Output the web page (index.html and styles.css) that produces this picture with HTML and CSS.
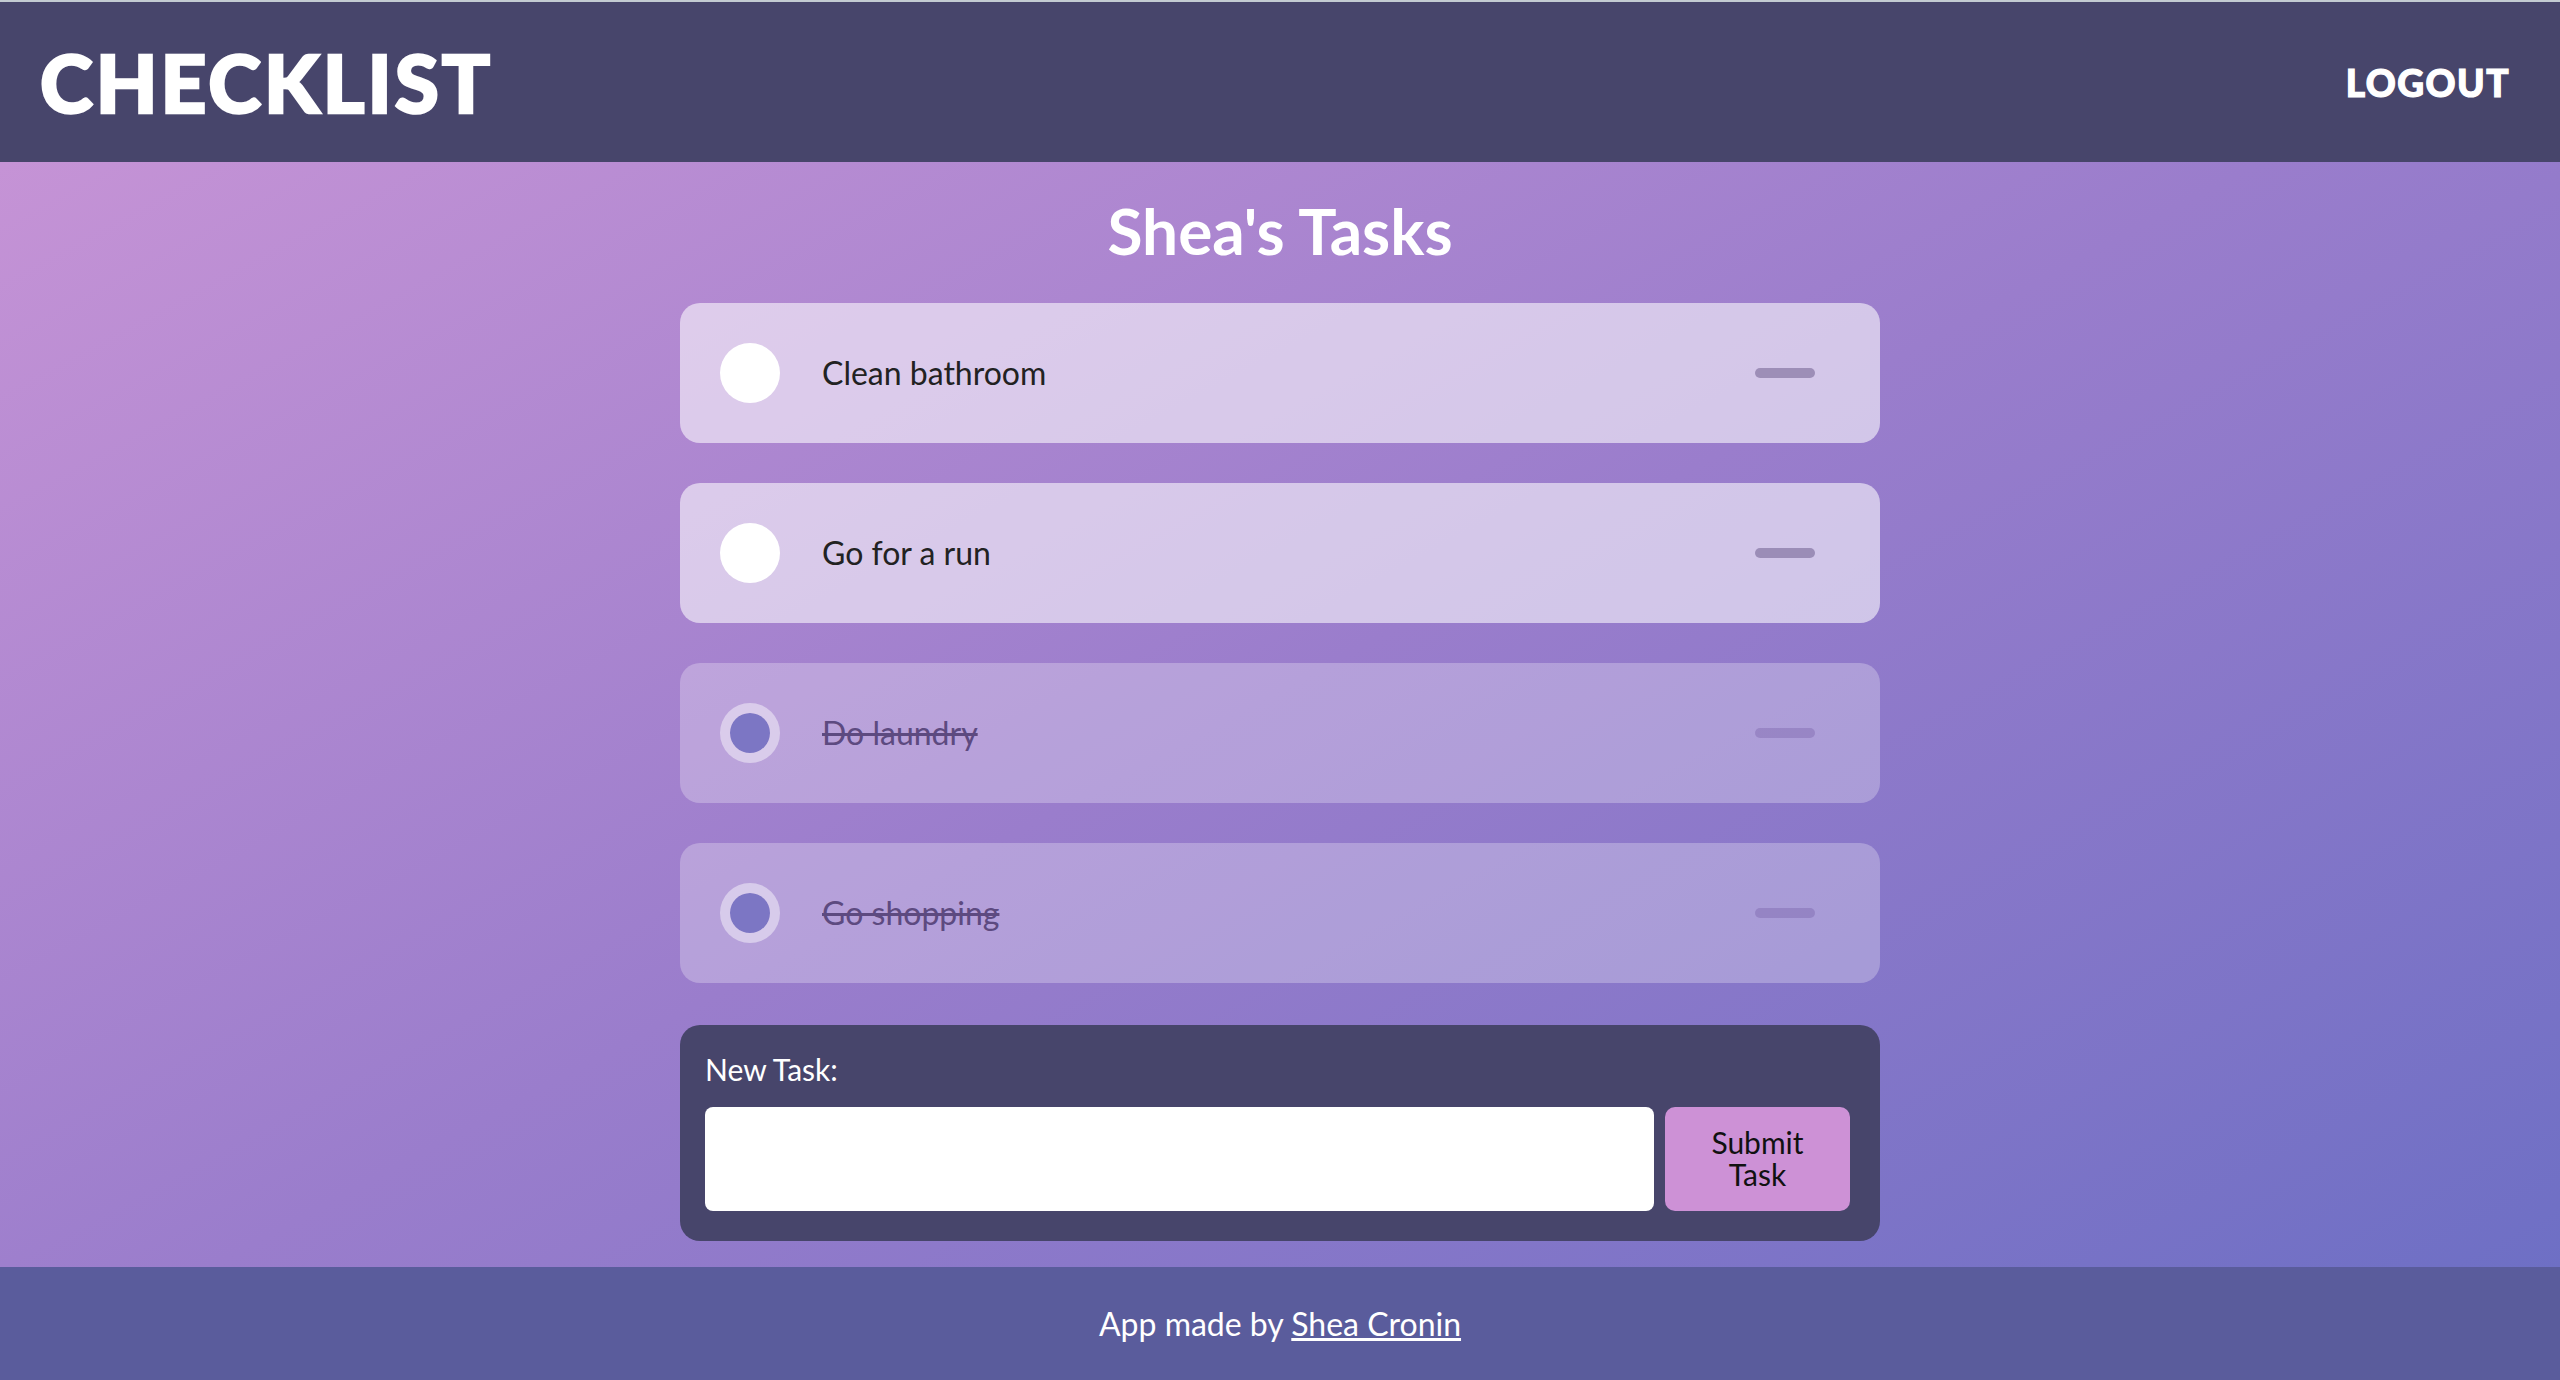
FILE: index.html
```html
<!DOCTYPE html>
<html lang="en">
<head>
<meta charset="utf-8">
<title>Checklist</title>
<link rel="stylesheet" href="styles.css">
</head>
<body>
<header class="topbar">
  <div class="brand">CHECKLIST</div>
  <a class="logout" href="#">LOGOUT</a>
</header>
<main class="content">
  <h1 class="title">Shea's Tasks</h1>
  <ul class="tasks">
    <li class="task">
      <span class="check"></span>
      <span class="task-text">Clean bathroom</span>
      <button class="remove" aria-label="Delete"></button>
    </li>
    <li class="task">
      <span class="check"></span>
      <span class="task-text">Go for a run</span>
      <button class="remove" aria-label="Delete"></button>
    </li>
    <li class="task done">
      <span class="check"></span>
      <span class="task-text">Do laundry</span>
      <button class="remove" aria-label="Delete"></button>
    </li>
    <li class="task done">
      <span class="check"></span>
      <span class="task-text">Go shopping</span>
      <button class="remove" aria-label="Delete"></button>
    </li>
  </ul>
  <form class="new-task">
    <label class="new-label" for="task-input">New Task:</label>
    <div class="new-row">
      <input id="task-input" class="new-input" type="text">
      <button class="submit" type="button">Submit<br>Task</button>
    </div>
  </form>
</main>
<footer class="footer">
  <p class="footer-text">App made by <a href="#">Shea Cronin</a></p>
</footer>
</body>
</html>
```
FILE: styles.css
```css
html, body {
  margin: 0;
  padding: 0;
}
body {
  min-height: 100vh;
  display: flex;
  flex-direction: column;
  font-family: Lato, "Open Sans", sans-serif;
  background: linear-gradient(to bottom right, #cb96d7, #9a7dcc 50%, #6a6ec4);
}
.topbar {
  box-sizing: border-box;
  height: 162px;
  border-top: 2px solid #c3cbd2;
  background: #47456b;
  display: flex;
  align-items: center;
  justify-content: space-between;
  padding: 0 50px 0 40px;
}
.brand {
  color: #fff;
  font-weight: 900;
  font-size: 80px;
  line-height: 1;
  letter-spacing: 3px;
  -webkit-text-stroke: 2.5px #fff;
}
.logout {
  color: #fff;
  font-weight: 900;
  font-size: 37px;
  letter-spacing: 1.5px;
  text-decoration: none;
  -webkit-text-stroke: 1.2px #fff;
}
.content {
  flex: 1;
  display: flex;
  flex-direction: column;
  align-items: center;
  padding: 31px 0 20px;
}
.title {
  margin: 0 0 33px;
  color: #fff;
  font-size: 64px;
  font-weight: 700;
  line-height: 1.2;
}
.tasks {
  list-style: none;
  margin: 0;
  padding: 0;
  width: 1200px;
  display: flex;
  flex-direction: column;
  gap: 40px;
}
.task {
  box-sizing: border-box;
  height: 140px;
  border-radius: 20px;
  background: rgba(255, 255, 255, 0.57);
  display: flex;
  align-items: center;
  padding: 0 65px 0 40px;
}
.check {
  box-sizing: border-box;
  width: 60px;
  height: 60px;
  border-radius: 50%;
  background: #fff;
  flex: none;
}
.task-text {
  margin-left: 42px;
  font-size: 32px;
  color: #222;
}
.remove {
  margin-left: auto;
  width: 60px;
  height: 10px;
  border: 0;
  padding: 0;
  border-radius: 5px;
  background: rgba(30, 10, 70, 0.3);
}
.task.done {
  background: rgba(255, 255, 255, 0.27);
}
.task.done .check {
  background: #7c76c4;
  border: 10px solid rgba(255, 255, 255, 0.45);
  background-clip: padding-box;
}
.task.done .task-text {
  color: #5d4a80;
  text-decoration: line-through;
  text-decoration-thickness: 3px;
}
.task.done .remove {
  background: rgba(60, 30, 110, 0.18);
}
.new-task {
  box-sizing: border-box;
  width: 1200px;
  margin-top: 42px;
  background: #47456b;
  border-radius: 20px;
  padding: 24px 30px 30px 25px;
}
.new-label {
  display: block;
  color: #fff;
  font-size: 30px;
  line-height: 40px;
  margin-bottom: 18px;
}
.new-row {
  display: flex;
  gap: 11px;
}
.new-input {
  flex: 1;
  height: 104px;
  box-sizing: border-box;
  border: 0;
  border-radius: 8px;
  background: #fff;
  font-size: 30px;
  font-family: inherit;
}
.submit {
  width: 185px;
  height: 104px;
  border: 0;
  border-radius: 10px;
  background: #cd91d6;
  color: #111;
  font-family: inherit;
  font-size: 30px;
  line-height: 1.05;
  padding: 0;
}
.footer {
  height: 113px;
  background: #5a5c9c;
  display: flex;
  align-items: center;
  justify-content: center;
}
.footer-text {
  margin: 0;
  color: #fff;
  font-size: 32px;
}
.footer-text a {
  color: #fff;
}
```
